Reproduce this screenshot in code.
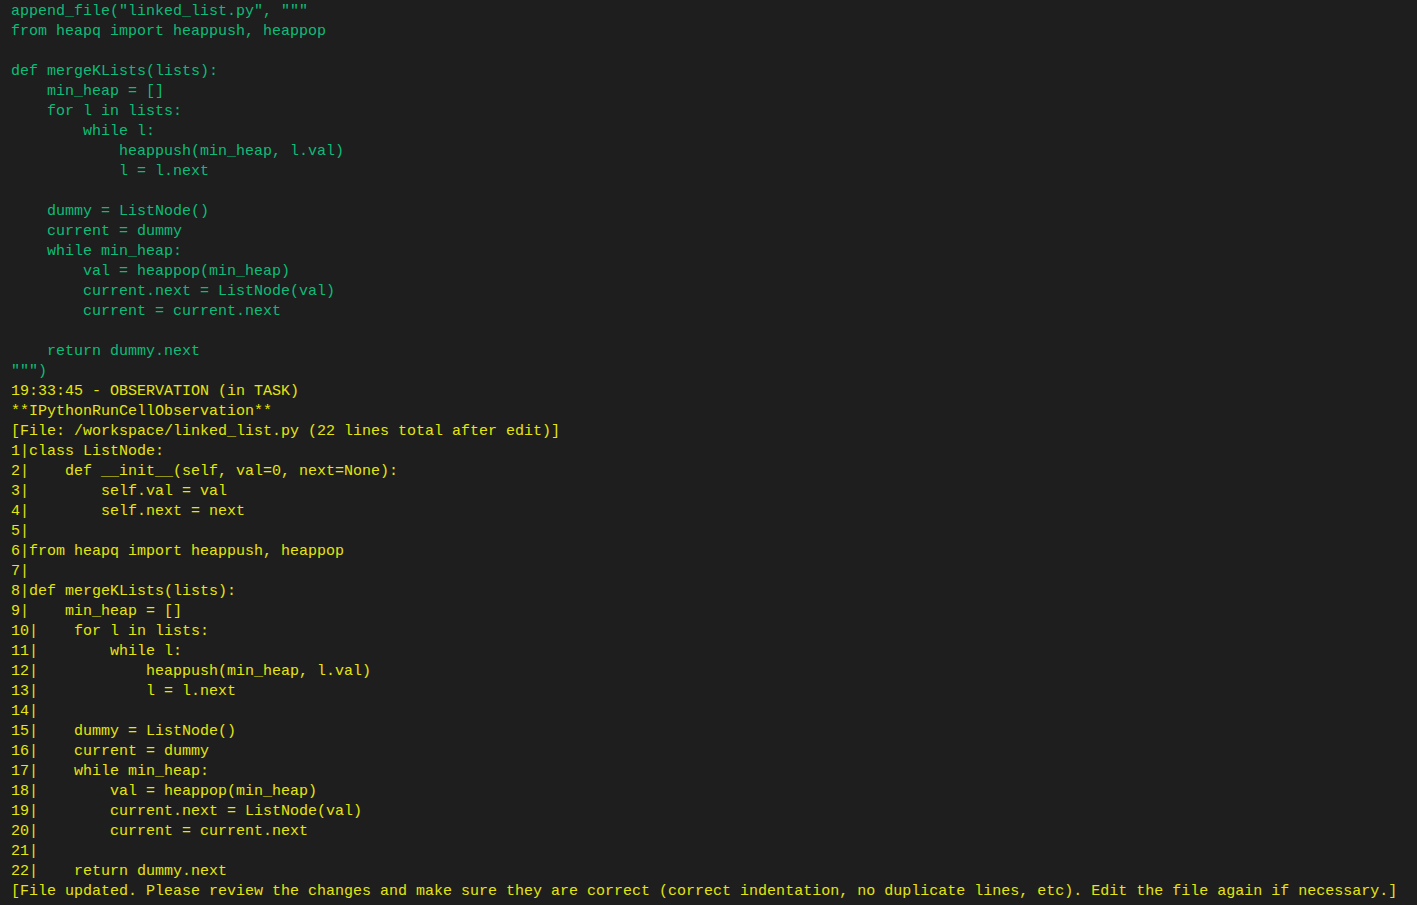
const green = `append_file("linked_list.py", """
from heapq import heappush, heappop

def mergeKLists(lists):
    min_heap = []
    for l in lists:
        while l:
            heappush(min_heap, l.val)
            l = l.next

    dummy = ListNode()
    current = dummy
    while min_heap:
        val = heappop(min_heap)
        current.next = ListNode(val)
        current = current.next

    return dummy.next
""")`;

const yellow = `19:33:45 - OBSERVATION (in TASK)
**IPythonRunCellObservation**
[File: /workspace/linked_list.py (22 lines total after edit)]
1|class ListNode:
2|    def __init__(self, val=0, next=None):
3|        self.val = val
4|        self.next = next
5|
6|from heapq import heappush, heappop
7|
8|def mergeKLists(lists):
9|    min_heap = []
10|    for l in lists:
11|        while l:
12|            heappush(min_heap, l.val)
13|            l = l.next
14|
15|    dummy = ListNode()
16|    current = dummy
17|    while min_heap:
18|        val = heappop(min_heap)
19|        current.next = ListNode(val)
20|        current = current.next
21|
22|    return dummy.next
[File updated. Please review the changes and make sure they are correct (correct indentation, no duplicate lines, etc). Edit the file again if necessary.]`;

export default function App() {
  return (
    <div className="w-[1417px] h-[905px] overflow-hidden bg-[#1e1e1e] pl-[11px] pt-[2px] font-['Liberation_Mono',monospace] text-[15px] leading-[20px]">
      <pre className="whitespace-pre text-[#0dbc79] font-['Liberation_Mono',monospace]">{green}</pre>
      <pre className="whitespace-pre text-[#e5e510] font-['Liberation_Mono',monospace]">{yellow}</pre>
    </div>
  );
}
